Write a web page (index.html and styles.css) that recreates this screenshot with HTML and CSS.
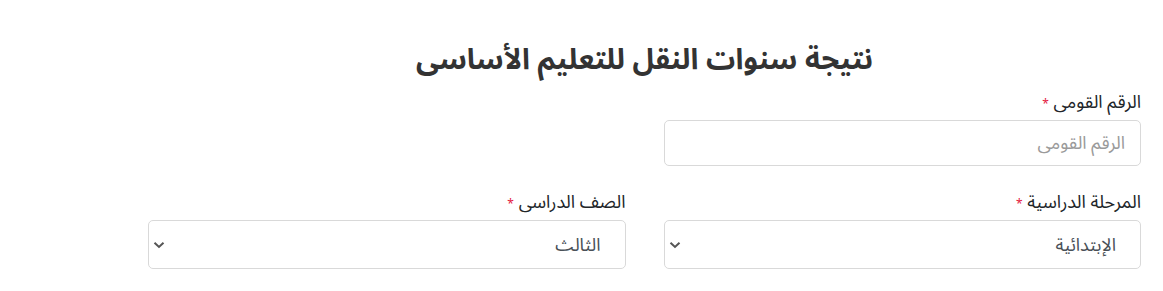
FILE: index.html
```html
<!DOCTYPE html>
<html lang="ar" dir="rtl">
<head>
<meta charset="utf-8">
<title>نتيجة سنوات النقل للتعليم الأساسى</title>
<link rel="stylesheet" href="styles.css">
</head>
<body>
<div class="page">
  <h1 class="title">نتيجة سنوات النقل للتعليم الأساسى</h1>
  <form class="form">
    <div class="row">
      <div class="field">
        <label class="label">الرقم القومى <span class="req">*</span></label>
        <input class="input" type="text" placeholder="الرقم القومى">
      </div>
      <div class="field"></div>
    </div>
    <div class="row">
      <div class="field">
        <label class="label">المرحلة الدراسية <span class="req">*</span></label>
        <div class="select-wrap">
          <select class="select"><option>الإبتدائية</option></select>
          <svg class="chev" width="12" height="8" viewBox="0 0 12 8"><path d="M1.5 1.8 L6 6 L10.5 1.8" fill="none" stroke="#555" stroke-width="2"/></svg>
        </div>
      </div>
      <div class="field">
        <label class="label">الصف الدراسى <span class="req">*</span></label>
        <div class="select-wrap">
          <select class="select"><option>الثالث</option></select>
          <svg class="chev" width="12" height="8" viewBox="0 0 12 8"><path d="M1.5 1.8 L6 6 L10.5 1.8" fill="none" stroke="#555" stroke-width="2"/></svg>
        </div>
      </div>
    </div>
  </form>
</div>
</body>
</html>
```
FILE: styles.css
```css
* { box-sizing: border-box; }
html, body { margin: 0; padding: 0; background: #fff; }
body {
  font-family: "Noto Sans Arabic", "DejaVu Sans", sans-serif;
  color: #212529;
}
.page {
  padding: 40px 22px 0 148px;
}
.title {
  margin: 0;
  text-align: center;
  font-size: 29px;
  font-weight: 700;
  line-height: 40px;
  color: #333;
}
.form { display: flex; flex-direction: column; gap: 23px; margin-top: 9px; }
.row {
  display: grid;
  grid-template-columns: 1fr 1fr;
  column-gap: 38px;
}
.field { display: flex; flex-direction: column; }
.label {
  font-size: 18px;
  line-height: 26px;
  margin-bottom: 2px;
  color: #212529;
}
.req { color: #e3173e; font-size: 12px; }
.input, .select {
  width: 100%;
  font-family: inherit;
  font-size: 18px;
  border: 1px solid #d9d9d9;
  border-radius: 5px;
  background: #fff;
  color: #495057;
  outline: none;
}
.input {
  height: 46px;
  padding: 0 15px;
}
.input::placeholder { color: #9a9a9a; }
.select-wrap { position: relative; }
.select {
  height: 49px;
  padding: 0 24px 0 30px;
  appearance: none;
  -webkit-appearance: none;
}
.chev {
  position: absolute;
  left: 5px;
  top: 21px;
  pointer-events: none;
}
```
